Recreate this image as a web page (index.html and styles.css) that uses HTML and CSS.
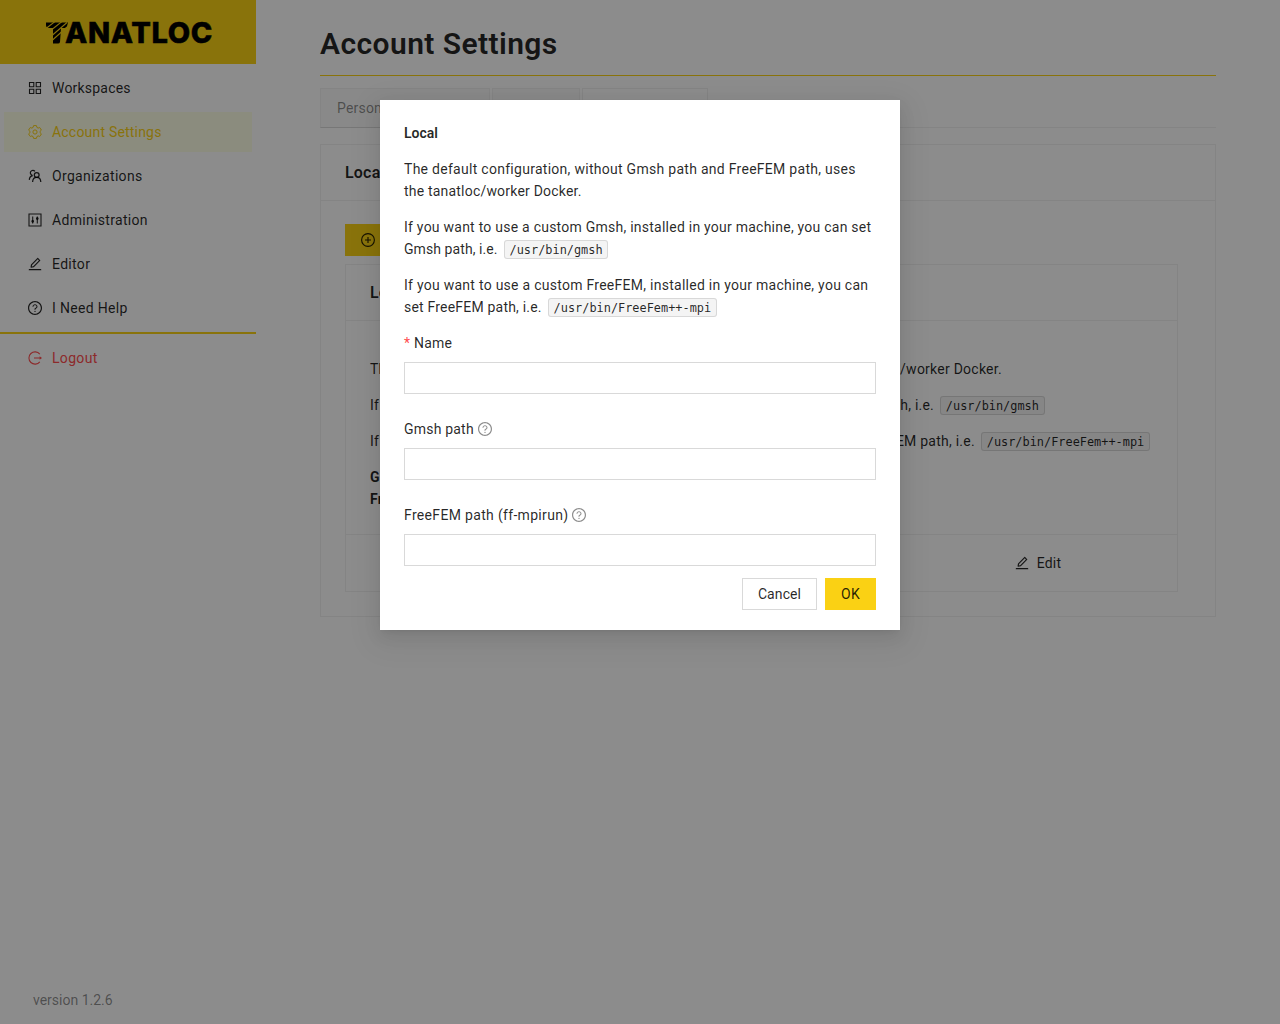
FILE: index.html
```html
<!DOCTYPE html>
<html lang="en">
<head>
<meta charset="utf-8">
<title>Account Settings</title>
<link rel="stylesheet" href="styles.css">
</head>
<body>
<svg class="sprite" width="0" height="0">
  <symbol id="i-edit" viewBox="64 64 896 896"><path d="M257.700 752c2 0 4-.2 6-.5L431.900 722c2-.4 3.900-1.300 5.300-2.800l423.900-423.900a9.960 9.960 0 000-14.100L694.900 114.900c-1.900-1.900-4.400-2.900-7.100-2.900s-5.200 1-7.100 2.900L256.800 538.800c-1.500 1.500-2.400 3.300-2.800 5.300l-29.500 168.200a33.500 33.500 0 009.400 29.800c6.600 6.400 14.900 9.900 23.800 9.900zm67.400-174.400L687.800 215l73.300 73.300-362.700 362.600-88.900 15.700 15.600-89zM880 836H144c-17.700 0-32 14.300-32 32v36c0 4.400 3.600 8 8 8h784c4.400 0 8-3.600 8-8v-36c0-17.700-14.300-32-32-32z"/></symbol>
  <symbol id="i-help" viewBox="64 64 896 896"><path d="M512 64C264.600 64 64 264.600 64 512s200.600 448 448 448 448-200.600 448-448S759.400 64 512 64zm0 820c-205.400 0-372-166.600-372-372s166.600-372 372-372 372 166.600 372 372-166.600 372-372 372z"/><path d="M623.600 316.700C593.600 290.400 554 276 512 276s-81.600 14.500-111.600 40.700C369.200 344 352 380.700 352 420v7.600c0 4.400 3.600 8 8 8h48c4.400 0 8-3.600 8-8V420c0-44.100 43.100-80 96-80s96 35.900 96 80c0 31.100-22 59.600-56.100 72.700-21.200 8.100-39.200 22.300-52.100 40.900-13.100 19-19.900 41.800-19.900 64.900V620c0 4.400 3.600 8 8 8h48c4.400 0 8-3.600 8-8v-22.700a48.300 48.300 0 0130.900-44.800c59-22.700 97.100-74.700 97.100-132.500.1-39.300-17.100-76-48.300-103.300zM472 732a40 40 0 1080 0 40 40 0 10-80 0z"/></symbol>
</svg>
<div class="layout">
  <aside class="sidebar">
    <div class="logo">
      <svg class="logo-t" width="22" height="22" viewBox="0 0 22 22"><path d="M0 .5h22l-1.500 5.500H15L14 20q-.3 1.500-2 1.500H7V6H3Q0 6 0 3z"/><path class="cut" d="M0 6.500 9-.5M4 9 16-.5M6 13.500 21 .5M6 18.500 21 5"/></svg>
      <span class="logo-name">ANATLOC</span>
    </div>
    <nav class="menu">
      <a class="item"><svg class="icon" viewBox="0 0 14 14"><g class="line"><path d="M1.500 1.500h4.300v4.300H1.500zM8.200 1.500h4.300v4.300H8.200zM1.500 8.200h4.300v4.300H1.500zM8.200 8.200h4.300v4.300H8.200z"/></g></svg><span>Workspaces</span></a>
      <a class="item selected"><svg class="icon" viewBox="0 0 14 14"><g class="line round"><path d="M5.500.7q1.500-.3 3 0l.4 1.700 1.200.7 1.700-.5q1.100 1.100 1.500 2.600L12 6.400v1.200l1.300 1.200q-.4 1.500-1.500 2.600l-1.700-.5-1.200.7-.4 1.700q-1.500.3-3 0l-.4-1.700-1.200-.7-1.700.5Q1.100 10.300.7 8.800L2 7.600V6.400L.7 5.200q.4-1.500 1.500-2.600l1.700.5 1.200-.7z"/><circle cx="7" cy="7" r="2.100"/></g></svg><span>Account Settings</span></a>
      <a class="item"><svg class="icon" viewBox="0 0 14 14"><g class="line bold"><circle cx="8.700" cy="6" r="2.400"/><path d="M4.600 13c.1-2.700 1.700-4.600 4.100-4.600s4 1.900 4.100 4.600M6.900 2.400A2.500 2.500 0 1 0 4.400 6.300M1.300 10.900c.1-2.200 1.100-3.800 3.400-4.200"/></g></svg><span class="wide">Organizations</span></a>
      <a class="item"><svg class="icon" viewBox="0 0 14 14"><g class="line"><path d="M1 1h12v12H1zM4.700 3.400v7.200M9.300 3.400v7.200"/><circle cx="4.700" cy="8.300" r=".8"/><circle cx="9.300" cy="5.600" r=".8"/></g></svg><span class="wide">Administration</span></a>
      <a class="item"><svg class="icon"><use href="#i-edit"/></svg><span class="wide">Editor</span></a>
      <a class="item"><svg class="icon"><use href="#i-help"/></svg><span class="wide">I Need Help</span></a>
    </nav>
    <a class="item logout"><svg class="icon" viewBox="0 0 14 14"><g class="line"><path d="M11.800 3.200a6.100 6.100 0 1 0 0 7.600M6 7h7"/></g><path d="m11.600 5.200 2.400 1.800-2.400 1.800z"/></svg><span class="wide">Logout</span></a>
    <div class="version">version 1.2.6</div>
  </aside>
  <main class="content">
    <h1 class="title"><span>Account Settings</span></h1>
    <div class="tabs"><div class="tab t1">Personal</div><div class="tab t2"></div><div class="tab t3"></div></div>
    <section class="card outer">
      <h2 class="card-head">Local</h2>
      <div class="outer-body">
        <button class="btn primary add"><svg class="icon" viewBox="0 0 14 14"><g class="line"><circle cx="7" cy="7" r="6.400"/><path d="M7 4v6M4 7h6"/></g></svg></button>
        <div class="card inner">
          <h2 class="card-head">Local</h2>
          <div class="inner-body">
            <p><span class="bg1">The default configuration, without Gmsh path and FreeFEM path, uses the tanatloc/worker Docker.</span></p>
            <p><span class="bg2">If you want to use a custom Gmsh, installed in your machine, you can set Gmsh path, i.e.</span> <code>/usr/bin/gmsh</code></p>
            <p><span class="bg3">If you want to use a custom FreeFEM, installed in your machine, you can set FreeFEM path, i.e.</span> <code>/usr/bin/FreeFem++-mpi</code></p>
            <p><b>Gmsh path</b><br><b>FreeFEM path</b></p>
          </div>
          <div class="actions"><span></span><span></span><span class="edit"><svg class="icon"><use href="#i-edit"/></svg>Edit</span></div>
        </div>
      </div>
    </section>
  </main>
</div>
<div class="mask">
  <div class="modal">
    <h3 class="modal-title">Local</h3>
    <p><span class="m1">The default configuration, without Gmsh path and FreeFEM path, uses</span><br><span class="m2">the tanatloc/worker Docker.</span></p>
    <p><span class="m3">If you want to use a custom Gmsh, installed in your machine, you can set</span><br><span class="m4">Gmsh path, i.e.</span> <code>/usr/bin/gmsh</code></p>
    <p><span class="m5">If you want to use a custom FreeFEM, installed in your machine, you can</span><br><span class="m6">set FreeFEM path, i.e.</span> <code>/usr/bin/FreeFem++-mpi</code></p>
    <label class="label"><i class="req">*</i><span class="l1">Name</span></label><input class="input">
    <label class="label"><span class="l2">Gmsh path</span><svg class="icon tip"><use href="#i-help"/></svg></label><input class="input">
    <label class="label"><span class="l3">FreeFEM path (ff-mpirun)</span><svg class="icon tip"><use href="#i-help"/></svg></label><input class="input">
    <div class="footer"><button class="btn cancel">Cancel</button><button class="btn primary ok">OK</button></div>
  </div>
</div>
</body>
</html>
```

FILE: styles.css
```css
* { box-sizing: border-box; }
body { margin: 0; height: 1024px; overflow: hidden; background: #fff; color: rgba(0,0,0,.85); font: 14px/22px Roboto, "Noto Sans", sans-serif; letter-spacing: .2px; }
.sprite { position: absolute; }
p { margin: 0 0 14px; white-space: nowrap; }
h1, h2, h3 { margin: 0; }
.icon { width: 14px; height: 14px; fill: currentColor; flex: none; }
.line { fill: none; stroke: currentColor; stroke-width: 1.1; }
.bold { stroke-width: 1.25; }
.round { stroke-width: 1; stroke-linejoin: round; }
.layout { display: flex; height: 1024px; }
.sidebar { width: 256px; display: flex; flex-direction: column; flex: none; }
.logo { height: 64px; background: #fad114; display: flex; align-items: center; padding: 1px 0 0 46px; color: #000; }
.logo-t { flex: none; }
.cut { stroke: #fad114; stroke-width: 1.1; fill: none; }
.logo-name { font: 800 29px/32px Inter, sans-serif; letter-spacing: .65px; margin-left: -3px; -webkit-text-stroke: .5px #000; }
.menu { border-bottom: 2px solid #fad114; padding: 4px 4px 0; display: flex; flex-direction: column; gap: 4px; height: 270px; }
.item { display: flex; align-items: center; gap: 10px; height: 40px; padding-left: 24px; }
.wide { letter-spacing: .32px; }
.selected { background: #feffe6; color: #fad114; }
.logout { color: #ff4d4f; margin: 4px 4px 0; }
.version { margin: auto 0 13px 33px; color: rgba(0,0,0,.45); letter-spacing: 0; }
.content { padding: 0 64px; flex: 1; }
.title { height: 76px; padding-top: 24px; font-size: 30px; line-height: 40px; font-weight: 600; letter-spacing: .42px; border-bottom: 1px solid #fad114; }
.tabs { display: flex; gap: 2px; height: 40px; margin: 12px 0 16px; border-bottom: 1px solid #f0f0f0; }
.tab { height: 40px; border: 1px solid #f0f0f0; background: #fafafa; padding: 8px 16px; color: rgba(0,0,0,.45); }
.t1 { width: 170px; border-bottom-color: #d9d9d9; } .t2 { width: 88px; } .t3 { width: 126px; background: #fff; }
.card { border: 1px solid #f0f0f0; }
.card-head { font-size: 16px; font-weight: 600; line-height: 24px; padding: 16px 24px; height: 56px; border-bottom: 1px solid #f0f0f0; }
.outer { height: 473px; }
.outer-body { padding: 23px 37px 0 24px; }
.btn { height: 32px; border: 1px solid #d9d9d9; background: #fff; padding: 0 15px; font: inherit; letter-spacing: inherit; color: inherit; display: flex; align-items: center; justify-content: center; }
.primary { background: #fad114; border-color: #fad114; }
.add { width: 100px; justify-content: flex-start; }
.inner { margin-top: 8px; height: 328px; display: flex; flex-direction: column; }
.inner-body { padding: 37px 24px 0; height: 213px; }
.actions { display: grid; grid-template-columns: repeat(3, 1fr); border-top: 1px solid #f0f0f0; flex: 1; align-items: center; }
.edit { display: flex; gap: 8px; align-items: center; justify-content: center; padding-right: 1px; }
code { display: inline-block; height: 19px; margin: 0 2.400px; padding: 0 4.800px; border: 1px solid rgba(100,100,100,.2); border-radius: 3px; background: rgba(150,150,150,.1); font: 11.900px/18px "DejaVu Sans Mono", monospace; letter-spacing: 0; vertical-align: 0; }
.bg1 { letter-spacing: .245px; }
.bg3 { letter-spacing: .24px; }
.bg2 { letter-spacing: .205px; }
.mask { position: absolute; inset: 0; background: rgba(0,0,0,.45); }
.modal { width: 520px; height: 530px; margin: 100px auto 0; background: #fff; padding: 22px 24px 0; box-shadow: 0 3px 6px -4px rgba(0,0,0,.12), 0 6px 16px rgba(0,0,0,.08), 0 9px 28px 8px rgba(0,0,0,.05); }
.modal-title { font-size: 14px; font-weight: 600; margin-bottom: 14px; letter-spacing: 0; }
.m1 { letter-spacing: .28px; }
.m3 { letter-spacing: .24px; }
.m4 { letter-spacing: .08px; }
.m5 { letter-spacing: .265px; }
.l3 { letter-spacing: .325px; }
.label { display: flex; align-items: center; height: 22px; margin-bottom: 8px; }
.req { color: #ff4d4f; font-style: normal; margin-right: 4px; letter-spacing: 0; }
.tip { margin-left: 4px; color: rgba(0,0,0,.45); }
.input { display: block; width: 100%; height: 32px; border: 1px solid #d9d9d9; margin-bottom: 24px; outline: none; }
.footer { display: flex; gap: 8px; justify-content: flex-end; margin-top: -12px; }
.cancel { width: 75px; letter-spacing: .1px; }
.ok { width: 51px; }
```
